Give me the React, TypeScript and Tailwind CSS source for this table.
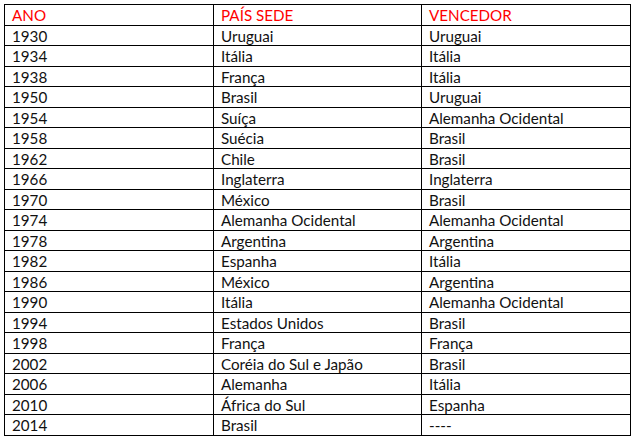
import React from "react";

const rows: [string, string, string][] = [
  ["1930", "Uruguai", "Uruguai"],
  ["1934", "Itália", "Itália"],
  ["1938", "França", "Itália"],
  ["1950", "Brasil", "Uruguai"],
  ["1954", "Suíça", "Alemanha Ocidental"],
  ["1958", "Suécia", "Brasil"],
  ["1962", "Chile", "Brasil"],
  ["1966", "Inglaterra", "Inglaterra"],
  ["1970", "México", "Brasil"],
  ["1974", "Alemanha Ocidental", "Alemanha Ocidental"],
  ["1978", "Argentina", "Argentina"],
  ["1982", "Espanha", "Itália"],
  ["1986", "México", "Argentina"],
  ["1990", "Itália", "Alemanha Ocidental"],
  ["1994", "Estados Unidos", "Brasil"],
  ["1998", "França", "França"],
  ["2002", "Coréia do Sul e Japão", "Brasil"],
  ["2006", "Alemanha", "Itália"],
  ["2010", "África do Sul", "Espanha"],
  ["2014", "Brasil", "----"],
];

const all: [string, string, string][] = [["ANO", "PAÍS SEDE", "VENCEDOR"], ...rows];

function lineY(k: number) {
  return Math.round(4 + 20.5 * k);
}

export default function App() {
  return (
    <div className="w-[638px] h-[443px] bg-white pt-[4px] pl-[4px]" style={{ fontFamily: "Lato, 'Liberation Sans', sans-serif" }}>
      <div className="w-[627px] border border-black text-[15.2px] text-[#111]">
        {all.map((r, i) => {
          const h = lineY(i + 1) - lineY(i);
          const header = i === 0;
          return (
            <div
              key={i}
              className={`flex ${i < all.length - 1 ? "border-b border-black" : ""} ${header ? "text-[#ff0000]" : ""}`}
              style={{ height: i === all.length - 1 ? h - 1 : h }}
            >
              <div className="w-[209px] border-r border-black pl-[7px] flex items-center pt-[1px]">{r[0]}</div>
              <div className="w-[208px] border-r border-black pl-[7px] flex items-center pt-[1px]">{r[1]}</div>
              <div className="flex-1 pl-[7px] flex items-center pt-[1px]">{r[2]}</div>
            </div>
          );
        })}
      </div>
    </div>
  );
}
